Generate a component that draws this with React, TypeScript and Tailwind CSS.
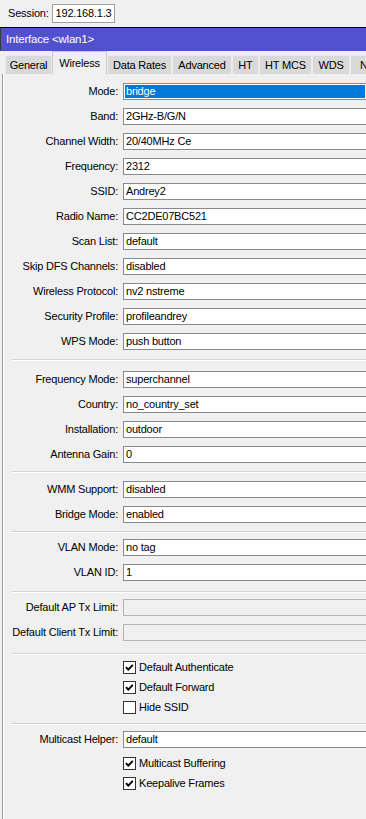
import { Fragment } from "react";

type Field = { label: string; value: string; selected?: boolean; disabled?: boolean };

const groups: { fields: Field[]; sepTop: string; nextTop: string }[] = [
  {
    fields: [
      { label: "Mode", value: "bridge", selected: true },
      { label: "Band", value: "2GHz-B/G/N" },
      { label: "Channel Width", value: "20/40MHz Ce" },
      { label: "Frequency", value: "2312" },
      { label: "SSID", value: "Andrey2" },
      { label: "Radio Name", value: "CC2DE07BC521" },
      { label: "Scan List", value: "default" },
      { label: "Skip DFS Channels", value: "disabled" },
      { label: "Wireless Protocol", value: "nv2 nstreme" },
      { label: "Security Profile", value: "profileandrey" },
      { label: "WPS Mode", value: "push button" },
    ],
    sepTop: "mt-[9px]",
    nextTop: "mt-[10px]",
  },
  {
    fields: [
      { label: "Frequency Mode", value: "superchannel" },
      { label: "Country", value: "no_country_set" },
      { label: "Installation", value: "outdoor" },
      { label: "Antenna Gain", value: "0" },
    ],
    sepTop: "mt-[8px]",
    nextTop: "mt-[8px]",
  },
  {
    fields: [
      { label: "WMM Support", value: "disabled" },
      { label: "Bridge Mode", value: "enabled" },
    ],
    sepTop: "mt-[8px]",
    nextTop: "mt-[6px]",
  },
  {
    fields: [
      { label: "VLAN Mode", value: "no tag" },
      { label: "VLAN ID", value: "1" },
    ],
    sepTop: "mt-[10px]",
    nextTop: "mt-[6px]",
  },
  {
    fields: [
      { label: "Default AP Tx Limit", value: "", disabled: true },
      { label: "Default Client Tx Limit", value: "", disabled: true },
    ],
    sepTop: "mt-[12px]",
    nextTop: "mt-[6px]",
  },
];

const tabs = [
  { name: "General", w: "w-[47px]" },
  { name: "Wireless", w: "w-[55px]", active: true },
  { name: "Data Rates", w: "w-[65px]" },
  { name: "Advanced", w: "w-[60px]" },
  { name: "HT", w: "w-[27px]" },
  { name: "HT MCS", w: "w-[53px]" },
  { name: "WDS", w: "w-[38px]" },
  { name: "Nstreme", w: "w-[60px]" },
];

function Row({ field }: { field: Field }) {
  return (
    <div className="flex h-[17px] items-center">
      <div className="w-[114px] shrink-0 text-right whitespace-nowrap">{field.label}:</div>
      <div
        className={
          "ml-[5px] flex h-[17px] flex-1 items-center border border-r-0 " +
          (field.disabled
            ? "border-[#b4b4b4] bg-[#f0f0f0]"
            : "border-[#8a8a8a] bg-white")
        }
      >
        {field.selected ? (
          <div className="flex h-full flex-1 items-center p-[1px]">
            <div className="flex h-full flex-1 items-center bg-[#0078d7] pl-[1px] text-white">
              {field.value}
            </div>
          </div>
        ) : (
          <span className="pl-[2px]">{field.value}</span>
        )}
      </div>
    </div>
  );
}

function Check({ label, checked }: { label: string; checked: boolean }) {
  return (
    <div className="flex h-[13px] items-center">
      <div className="ml-[119px] flex h-[13px] w-[13px] items-center justify-center border border-[#333333] bg-white">
        {checked && (
          <svg width="11" height="11" viewBox="0 0 11 11">
            <path d="M2 5.2 L4.3 7.6 L8.8 2.8" fill="none" stroke="#000" strokeWidth="1.9" />
          </svg>
        )}
      </div>
      <span className="ml-[3px] whitespace-nowrap">{label}</span>
    </div>
  );
}

function Separator({ className }: { className: string }) {
  return <div className={"ml-[8px] h-[2px] border-t border-b border-t-[#d3d3d3] border-b-white " + className} />;
}

export default function App() {
  return (
    <div
      className="h-[819px] w-full overflow-hidden bg-[#f0f0f0] text-[11px] leading-none tracking-[-0.2px] text-black"
      style={{ fontFamily: '"Liberation Sans", Arial, sans-serif' }}
    >
      {/* session bar */}
      <div className="flex h-[27px] items-center pl-[8px]">
        <span>Session:</span>
        <div className="ml-[3px] flex h-[19px] w-[63px] items-center border border-[#a0a0a0] bg-white pl-[3px] text-[11px]">
          192.168.1.3
        </div>
      </div>

      {/* window */}
      <div className="border-t border-black">
        <div className="flex h-[23px] items-center border-l border-[#3a3a3a] bg-[#5150cf] pl-[5px] text-[11.5px] text-white">
          Interface &lt;wlan1&gt;
        </div>

        {/* tabs */}
        <div className="flex h-[23px] items-end overflow-hidden pl-[5px]">
          {tabs.map((t) => (
            <div
              key={t.name}
              className={
                "flex shrink-0 items-center justify-center whitespace-nowrap border border-b-0 " +
                t.w +
                " " +
                (t.active
                  ? "h-[23px] border-[#c9c9c9] bg-[#f0f0f0]"
                  : "h-[19px] border-[#ececec] bg-[#d9d9d9]")
              }
            >
              {t.name}
            </div>
          ))}
        </div>

        {/* panel */}
        <div className="ml-[2px] border-l border-[#a0a0a0]">
          <div className="border-l border-white pt-[9px]">
            {groups.map((g, gi) => (
              <Fragment key={gi}>
                <div className={"flex flex-col gap-[8px] " + (gi > 0 ? groups[gi - 1].nextTop : "")}>
                  {g.fields.map((f) => (
                    <Row key={f.label} field={f} />
                  ))}
                </div>
                <Separator className={g.sepTop} />
              </Fragment>
            ))}

            <div className="mt-[6px] flex flex-col gap-[7px]">
              <Check label="Default Authenticate" checked />
              <Check label="Default Forward" checked />
              <Check label="Hide SSID" checked={false} />
            </div>
            <Separator className="mt-[9px]" />

            <div className="mt-[6px]">
              <Row field={{ label: "Multicast Helper", value: "default" }} />
            </div>
            <div className="mt-[9px] flex flex-col gap-[7px] pb-[40px]">
              <Check label="Multicast Buffering" checked />
              <Check label="Keepalive Frames" checked />
            </div>
          </div>
        </div>
      </div>
    </div>
  );
}
